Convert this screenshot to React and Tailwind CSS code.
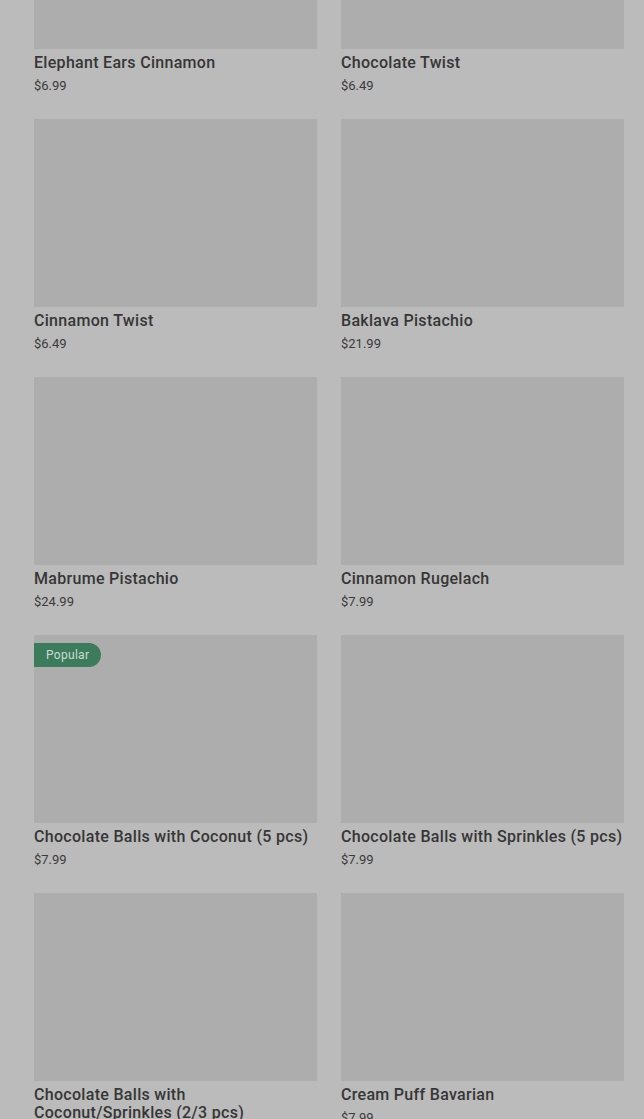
import React from "react";

const items = [
  { name: "Elephant Ears Cinnamon", price: "$6.99" },
  { name: "Chocolate Twist", price: "$6.49" },
  { name: "Cinnamon Twist", price: "$6.49" },
  { name: "Baklava Pistachio", price: "$21.99" },
  { name: "Mabrume Pistachio", price: "$24.99" },
  { name: "Cinnamon Rugelach", price: "$7.99" },
  { name: "Chocolate Balls with Coconut (5 pcs)", price: "$7.99", popular: true },
  { name: "Chocolate Balls with Sprinkles (5 pcs)", price: "$7.99" },
  { name: "Chocolate Balls with Coconut/Sprinkles (2/3 pcs)", price: "$7.99" },
  { name: "Cream Puff Bavarian", price: "$7.99" },
];

const Card = ({ item }) => (
  <div className="flex flex-col">
    <div className="relative h-[188px] bg-[#adadad]">
      {item.popular && (
        <span className="absolute left-0 top-2 h-6 pl-3 pr-3 flex items-center rounded-r-full bg-[#3c7c5c] text-[12px] tracking-[0.3px] text-[#c9ddd2]">
          Popular
        </span>
      )}
    </div>
    <p className="mt-[5px] text-[16px] leading-[18px] tracking-[0.3px] font-medium text-[#363636]">
      {item.name}
    </p>
    <p className="mt-[4px] text-[13px] leading-[20px] text-[#3a3a3a]">
      {item.price}
    </p>
  </div>
);

const App = () => {
  return (
    <div
      className="w-full h-screen overflow-hidden bg-[#bbbbbb]"
      style={{ fontFamily: "Roboto, 'Liberation Sans', sans-serif" }}
    >
      <div className="-mt-[139px] pl-[34px] pr-[20px] grid grid-cols-2 gap-x-6 gap-y-[23px]">
        {items.map((item) => (
          <Card key={item.name} item={item} />
        ))}
      </div>
    </div>
  );
};

export default App;
